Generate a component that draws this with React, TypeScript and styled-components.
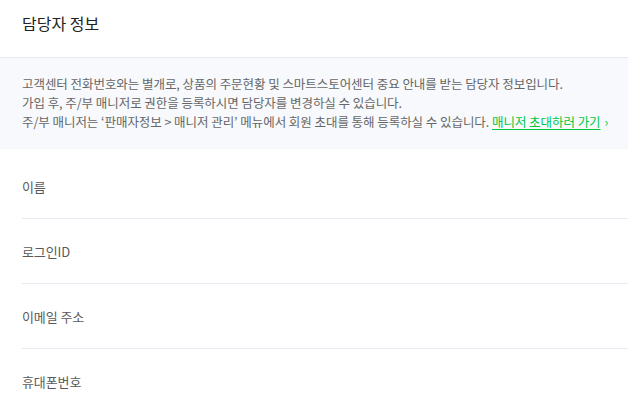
import React from "react";
import styled, { createGlobalStyle } from "styled-components";

const Global = createGlobalStyle`
  html, body { margin: 0; padding: 0; background: #fff; }
  body { font-family: "Noto Sans CJK KR", "Noto Sans", sans-serif; }
`;

const Page = styled.div`
  width: 628px;
  background: #fff;
`;

const Header = styled.header`
  display: flex;
  align-items: flex-start;
  padding: 11px 22px 0;
  border-bottom: 1px solid #e6e9ef;
  box-sizing: border-box;
  height: 58px;
`;

const Title = styled.h2`
  margin: 0;
  font-size: 16px;
  line-height: 24px;
  font-weight: 400;
  color: #222;
`;

const Notice = styled.div`
  background: #f7f9fc;
  padding: 16px 22px 17px;
  height: 58px;
`;

const NoticeLine = styled.p`
  margin: 0;
  font-size: 12.5px;
  line-height: 19px;
  color: #666;
  letter-spacing: -0.05px;
  white-space: nowrap;
`;

const InviteLink = styled.a`
  color: #00c73c;
  text-decoration: underline;
  text-underline-offset: 2px;
`;

const Chevron = styled.span`
  color: #00c73c;
  margin-left: 4px;
`;

const Fields = styled.div`
  padding: 5px 0 0 22px;
`;

const Row = styled.div<{ $last?: boolean }>`
  height: 65px;
  display: flex;
  align-items: center;
  border-bottom: ${(p) => (p.$last ? "none" : "1px solid #e6e9ef")};
  box-sizing: border-box;
`;

const Label = styled.span`
  font-size: 13px;
  color: #5a5a5a;
  letter-spacing: -0.1px;
`;

const fields = ["이름", "로그인ID", "이메일 주소", "휴대폰번호"];

export default function App() {
  return (
    <Page>
      <Global />
      <Header>
        <Title>담당자 정보</Title>
      </Header>
      <Notice>
        <NoticeLine>
          고객센터 전화번호와는 별개로, 상품의 주문현황 및 스마트스토어센터 중요 안내를 받는 담당자 정보입니다.
        </NoticeLine>
        <NoticeLine>가입 후, 주/부 매니저로 권한을 등록하시면 담당자를 변경하실 수 있습니다.</NoticeLine>
        <NoticeLine>
          주/부 매니저는 ‘판매자정보 &gt; 매니저 관리’ 메뉴에서 회원 초대를 통해 등록하실 수 있습니다.{" "}
          <InviteLink href="#">매니저 초대하러 가기</InviteLink>
          <Chevron>›</Chevron>
        </NoticeLine>
      </Notice>
      <Fields>
        {fields.map((f, i) => (
          <Row key={f} $last={i === fields.length - 1}>
            <Label>{f}</Label>
          </Row>
        ))}
      </Fields>
    </Page>
  );
}
